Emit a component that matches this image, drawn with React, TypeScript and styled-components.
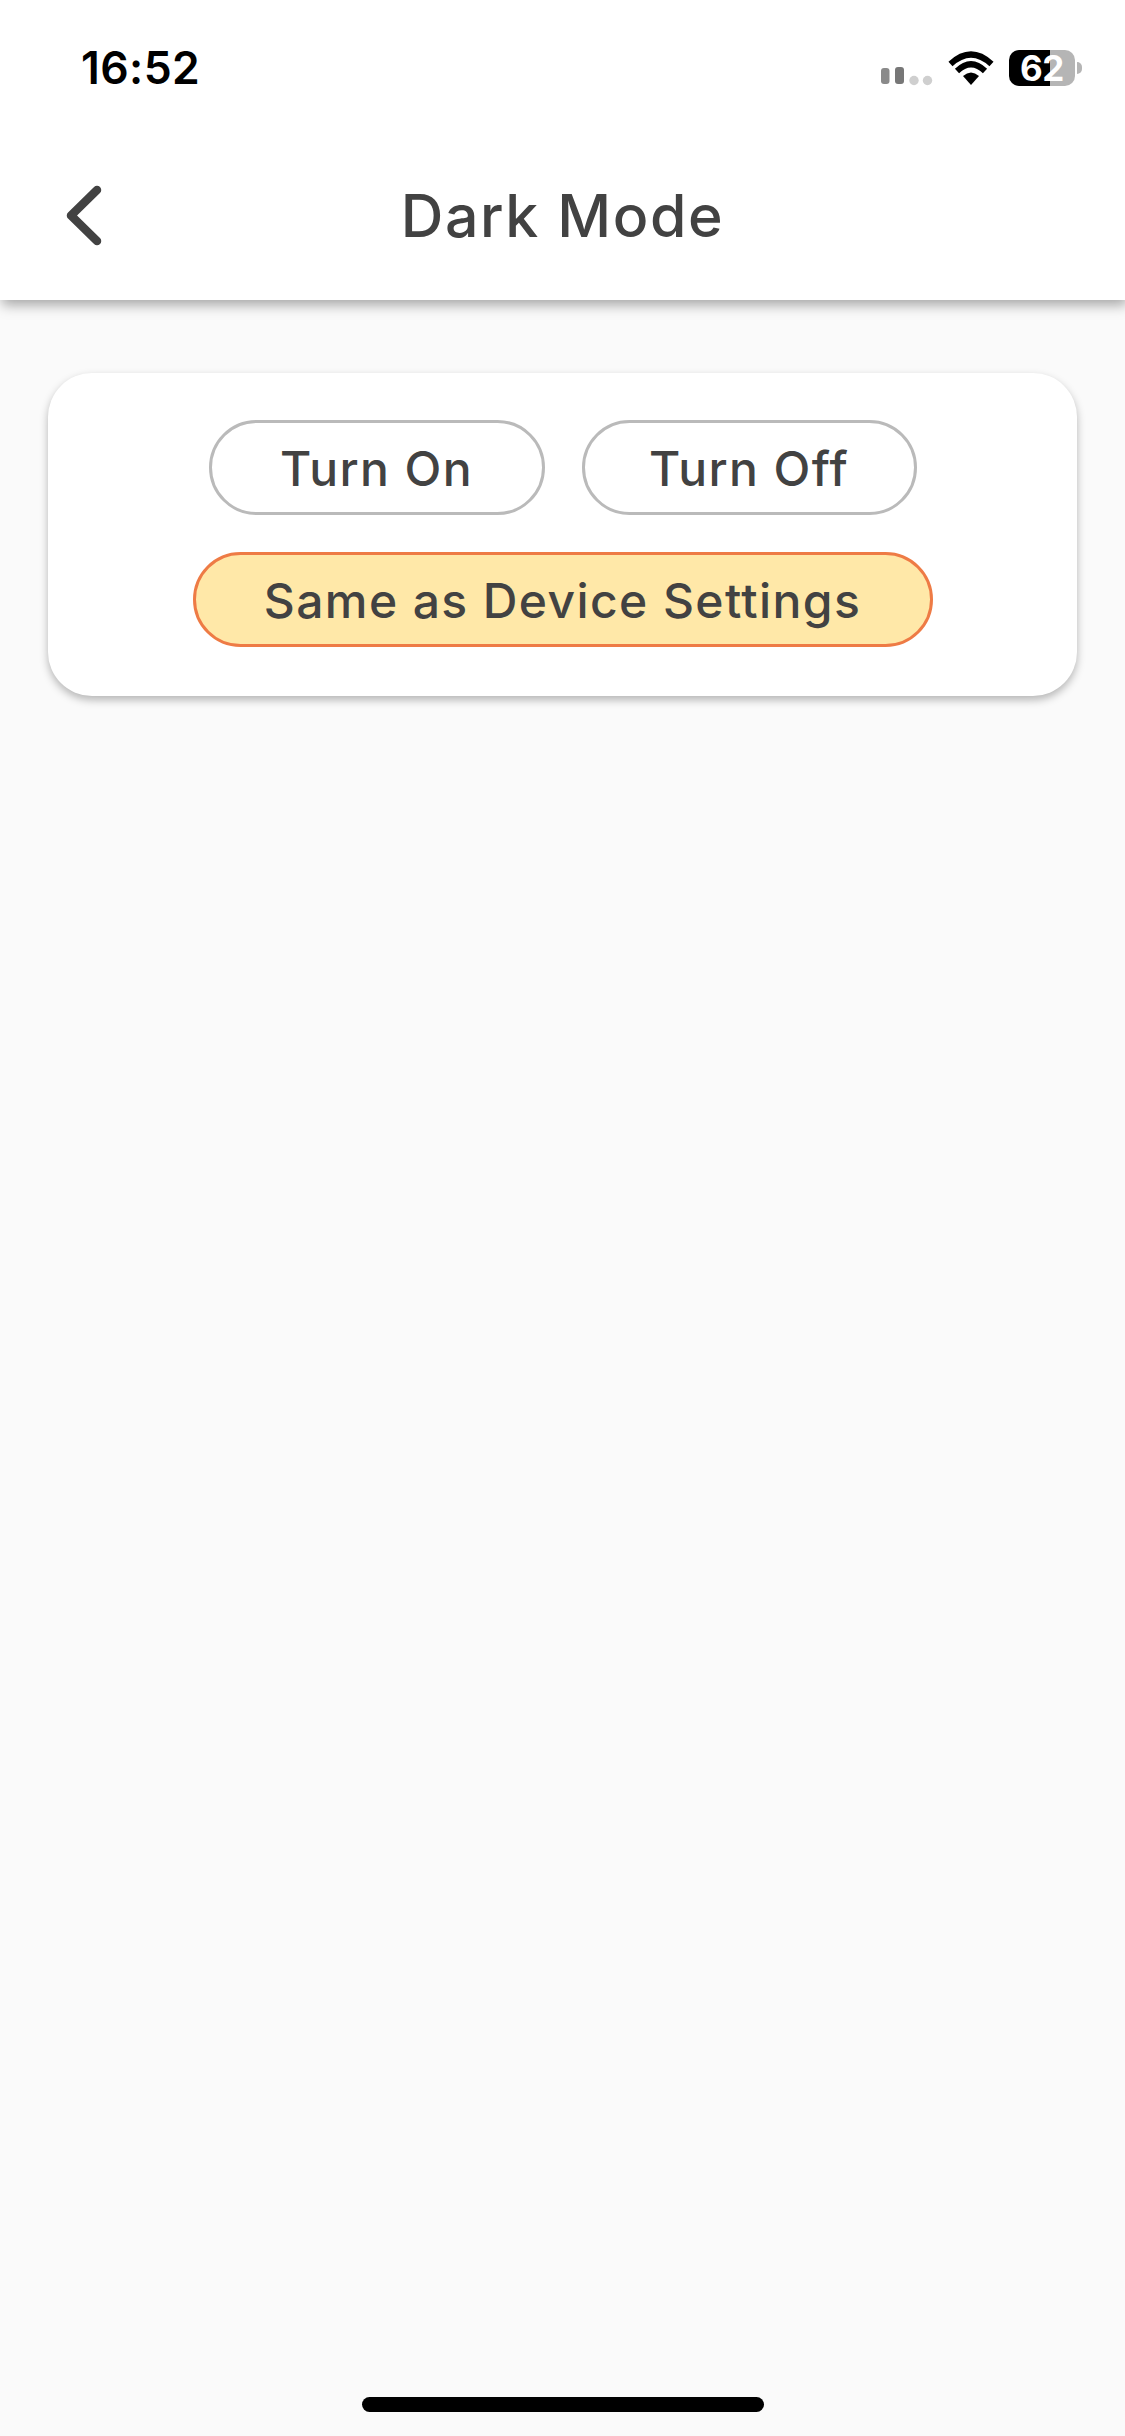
import React from "react";
import styled, { createGlobalStyle } from "styled-components";

const Global = createGlobalStyle`
  html, body { margin: 0; padding: 0; background: #fafafa; }
  * { box-sizing: border-box; }
`;

const Page = styled.div`
  width: 1125px;
  height: 2436px;
  display: flex;
  flex-direction: column;
  background: #fafafa;
  overflow: hidden;
  font-family: "Inter", "Liberation Sans", sans-serif;
  color: #424242;
`;

const Header = styled.header`
  height: 300px;
  flex: none;
  display: flex;
  flex-direction: column;
  background: #fff;
  box-shadow: 2px 5px 12px rgba(0, 0, 0, 0.34);
`;

const StatusBar = styled.div`
  height: 136px;
  padding: 0 43px 0 81px;
  display: flex;
  align-items: center;
  justify-content: space-between;
`;

const Time = styled.span`
  font-size: 44.5px;
  font-weight: 600;
  color: #000;
  letter-spacing: 0.4px;
`;

const StatusIcons = styled.div`
  display: flex;
  align-items: center;
`;

const SignalIcon = styled.svg`
  width: 52px;
  height: 20px;
  margin: 18px 15px 0 0;
`;

const WifiIcon = styled.svg`
  width: 46px;
  height: 34px;
  margin-right: 15px;
`;

const Battery = styled.div`
  position: relative;
  width: 66px;
  height: 36px;
  border-radius: 10px;
  background: linear-gradient(to right, #000 0 41px, #b5b5b5 41px);
  color: #fff;
  font-size: 35px;
  font-weight: 700;
  line-height: 36px;
  text-align: center;
  letter-spacing: -0.5px;
  margin-right: 7px;

  &::after {
    content: "";
    position: absolute;
    right: -7px;
    top: 12px;
    width: 5px;
    height: 12px;
    border-radius: 0 6px 6px 0;
    background: #b5b5b5;
  }
`;

const NavBar = styled.div`
  flex: 1;
  padding-bottom: 4px;
  position: relative;
  display: flex;
  align-items: center;
  justify-content: center;
`;

const BackButton = styled.svg`
  position: absolute;
  left: 62px;
  top: 44px;
  width: 44px;
  height: 68px;
`;

const Title = styled.h1`
  margin: 0;
  font-size: 59px;
  font-weight: 500;
  letter-spacing: 1.6px;
  line-height: 1.2;
`;

const Content = styled.main`
  flex: 1;
  padding: 73px 48px 0;
`;

const Card = styled.section`
  height: 323px;
  padding: 47px 0 0;
  display: flex;
  flex-direction: column;
  align-items: center;
  gap: 37px;
  background: #fff;
  border-radius: 44px;
  box-shadow: 0 4px 9px rgba(0, 0, 0, 0.28);
`;

const Row = styled.div`
  display: flex;
  justify-content: center;
  gap: 37px;
`;

const Pill = styled.button<{ $selected?: boolean; $width: number }>`
  width: ${(p) => p.$width}px;
  height: 95px;
  padding: 2px 0 0;
  display: flex;
  align-items: center;
  justify-content: center;
  border-radius: 48px;
  border: 3px solid ${(p) => (p.$selected ? "#ee7b45" : "#bababa")};
  background: ${(p) => (p.$selected ? "#ffe8a8" : "#fff")};
  color: #424242;
  font-family: inherit;
  font-size: 48px;
  font-weight: 500;
  letter-spacing: 1.4px;
`;

const HomeIndicator = styled.div`
  flex: none;
  align-self: center;
  width: 402px;
  height: 15px;
  margin-bottom: 24px;
  border-radius: 8px;
  background: #000;
`;

export default function App() {
  return (
    <Page>
      <Global />
      <Header>
        <StatusBar>
          <Time>16:52</Time>
          <StatusIcons>
            <SignalIcon viewBox="0 0 52 20" aria-hidden>
              <rect x="0" y="1" width="8.5" height="16" rx="3" fill="#8a8a8a" />
              <rect x="14" y="0" width="9" height="17" rx="3" fill="#777777" />
              <circle cx="33" cy="13.5" r="4.7" fill="#cfcfcf" />
              <circle cx="46.5" cy="13.5" r="4.7" fill="#cfcfcf" />
            </SignalIcon>
            <WifiIcon viewBox="0 0 46 34" aria-hidden>
              <path d="M23 34 L15 25 Q23 18 31 25 Z" fill="#000" />
              <path d="M9 20 Q23 6.5 37 20" fill="none" stroke="#000" strokeWidth="6" />
              <path d="M2.5 13 Q23 -6 43.5 13" fill="none" stroke="#000" strokeWidth="6" />
            </WifiIcon>
            <Battery>62</Battery>
          </StatusIcons>
        </StatusBar>
        <NavBar>
          <BackButton viewBox="0 0 44 68" fill="none" aria-hidden>
            <path
              d="M35 10 L9 35.5 L35 61"
              stroke="#424242"
              strokeWidth="8.5"
              strokeLinecap="round"
              strokeLinejoin="round"
            />
          </BackButton>
          <Title>Dark Mode</Title>
        </NavBar>
      </Header>
      <Content>
        <Card>
          <Row>
            <Pill $width={336}>Turn On</Pill>
            <Pill $width={335}>Turn Off</Pill>
          </Row>
          <Pill $selected $width={740}>Same as Device Settings</Pill>
        </Card>
      </Content>
      <HomeIndicator />
    </Page>
  );
}
